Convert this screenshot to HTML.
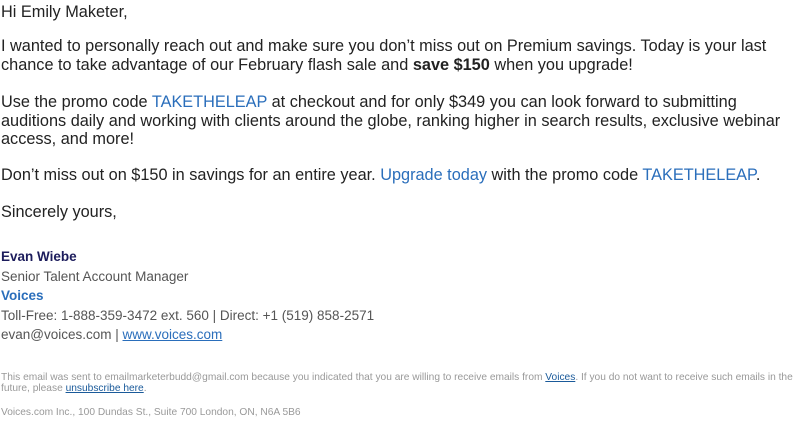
<!DOCTYPE html>
<html><head><style>
body{margin:0;background:#fff;font-family:"Liberation Sans",Arial,sans-serif;color:#222;}
.m{position:absolute;left:1px;font-size:16.3px;line-height:18.5px;white-space:nowrap;}
a{color:#2a6ebb;text-decoration:none;}
.s{position:absolute;left:1px;font-size:13.5px;line-height:19.6px;color:#555;}
.f{position:absolute;left:1px;font-size:10.2px;line-height:11px;color:#999;white-space:nowrap;}
.f a{color:#1a5a9a;text-decoration:underline;}
</style></head><body>
<div class="m" style="top:3px">Hi Emily Maketer,</div>
<div class="m" style="top:37px">I wanted to personally reach out and make sure you don’t miss out on Premium savings. Today is your last<br>chance to take advantage of our February flash sale and <b>save $150</b> when you upgrade!</div>
<div class="m" style="top:93px">Use the promo code <a>TAKETHELEAP</a> at checkout and for only $349 you can look forward to submitting<br>auditions daily and working with clients around the globe, ranking higher in search results, exclusive webinar<br>access, and more!</div>
<div class="m" style="top:166px">Don’t miss out on $150 in savings for an entire year. <a>Upgrade today</a> with the promo code <a>TAKETHELEAP</a>.</div>
<div class="m" style="top:203px">Sincerely yours,</div>
<div class="s" style="top:247px"><b style="color:#1c1c5c">Evan Wiebe</b><br>Senior Talent Account Manager<br><b style="color:#2a6ebb">Voices</b><br>Toll-Free: 1-888-359-3472 ext. 560 | Direct: +1 (519) 858-2571<br>evan@voices.com | <a style="text-decoration:underline">www.voices.com</a></div>
<div class="f" style="top:372px">This email was sent to emailmarketerbudd@gmail.com because you indicated that you are willing to receive emails from <a>Voices</a>. If you do not want to receive such emails in the<br>future, please <a>unsubscribe here</a>.</div>
<div class="f" style="top:407px">Voices.com Inc., 100 Dundas St., Suite 700 London, ON, N6A 5B6</div>
</body></html>
